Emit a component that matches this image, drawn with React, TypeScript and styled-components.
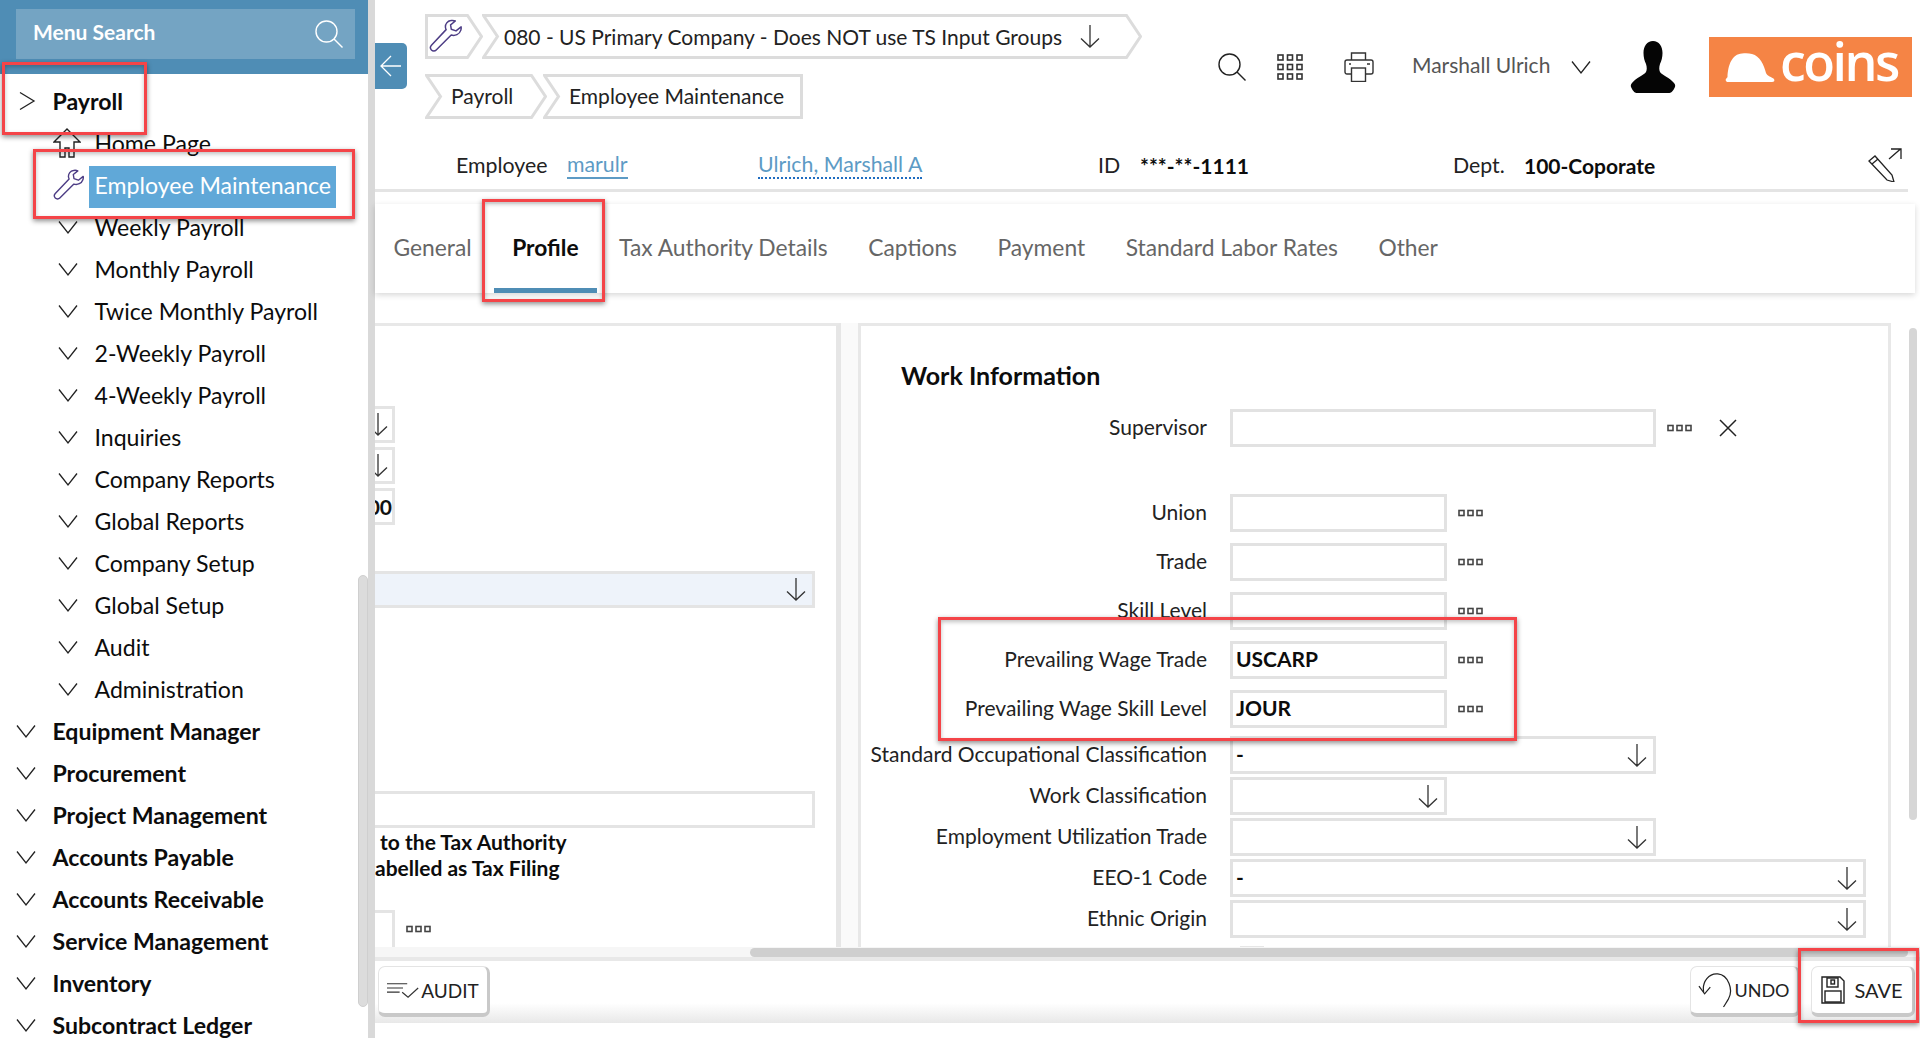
import React from 'react';
import styled, { createGlobalStyle } from 'styled-components';

const Global = createGlobalStyle`
  html, body { margin: 0; padding: 0; background: #fff; overflow: hidden; }
  * { box-sizing: border-box; }
  body { font-family: Lato, "Liberation Sans", sans-serif; color: #111; }
`;

const Page = styled.div`
  position: relative;
  display: flex;
  width: 1920px;
  height: 1038px;
  overflow: hidden;
`;

/* ---------- sidebar ---------- */
const Sidebar = styled.aside`
  position: relative;
  flex: 0 0 375px;
  height: 1038px;
  overflow: hidden;
  border-right: 7px solid #d9d9d9;
`;
const SideHead = styled.div`
  margin-right: -7px;
  height: 74px;
  padding: 9px 20px 15px 16px;
  background: #4f8db5;
  position: relative;
  z-index: 1;
`;
const SearchBox = styled.div`
  display: flex;
  align-items: center;
  justify-content: space-between;
  height: 50px;
  padding: 0 12px 0 17px;
  background: #74a4c3;
  color: #fff;
  font-size: 21px;
  font-weight: 700;
`;
const SearchLabel = styled.span`
  margin-bottom: 5px;
`;
const Nav = styled.nav`
  padding-top: 6px;
`;
const NavRow = styled.div<{ $sub?: boolean; $top?: boolean }>`
  display: flex;
  align-items: center;
  height: 42px;
  padding-left: ${p => (p.$sub ? '58px' : '16px')};
  font-size: 23.1px;
  font-weight: ${p => (p.$top ? 700 : 400)};
  color: #0c0c0c;
  white-space: nowrap;
`;
const NavIcon = styled.span<{ $sub?: boolean }>`
  display: flex;
  align-items: center;
  justify-content: flex-start;
  flex: 0 0 ${p => (p.$sub ? '41.5px' : '36.5px')};
  margin-left: ${p => (p.$sub ? '-5px' : '0')};
`;
const NavText = styled.span<{ $active?: boolean }>`
  display: inline-flex;
  align-items: center;
  height: ${p => (p.$active ? '42px' : 'auto')};
  margin-left: ${p => (p.$active ? '-6px' : '0')};
  margin-top: ${p => (p.$active ? '4px' : '0')};
  padding: ${p => (p.$active ? '0 6px 4px' : '0')};
  width: ${p => (p.$active ? '247px' : 'auto')};
  background: ${p => (p.$active ? '#60a8d8' : 'transparent')};
  color: ${p => (p.$active ? '#fff' : 'inherit')};
`;
const SideThumb = styled.div`
  position: absolute;
  left: 358px;
  top: 575px;
  width: 10px;
  height: 432px;
  border-radius: 5px;
  background: #dcdcdc;
  border: 1px solid #cfcfcf;
`;
const EdgeThumb = styled.div`
  position: absolute;
  left: 368px;
  top: 502px;
  width: 7px;
  height: 88px;
  background: #bcbcbc;
`;

/* ---------- main ---------- */
const Main = styled.main`
  position: relative;
  flex: 1;
  min-width: 0;
  height: 1038px;
  display: flex;
  flex-direction: column;
  padding-bottom: 15px;
`;
const Collapse = styled.div`
  position: absolute;
  left: 0;
  top: 43px;
  width: 32px;
  height: 46px;
  background: #4f8db5;
  border-radius: 0 5px 5px 0;
  display: flex;
  align-items: center;
  justify-content: center;
`;
const TopBar = styled.header`
  flex: 0 0 130px;
  display: flex;
  justify-content: space-between;
`;
const Crumbs = styled.div`
  display: flex;
  flex-direction: column;
  gap: 15px;
  padding: 14px 0 0 50px;
`;
const CrumbLine = styled.div`
  display: flex;
`;
const CrumbItem = styled.div<{ $w: number; $over?: number; $h: number }>`
  position: relative;
  flex: 0 0 ${p => p.$w}px;
  height: ${p => p.$h}px;
  margin-left: ${p => -(p.$over || 0)}px;
  display: flex;
  align-items: center;
  font-size: 21px;
  color: #222;
  white-space: nowrap;
`;
const CrumbOutline = styled.svg`
  position: absolute;
  inset: 0;
`;
const CrumbLabel = styled.span<{ $pl: number; $pb: number }>`
  position: relative;
  display: flex;
  align-items: center;
  padding-left: ${p => p.$pl}px;
  padding-bottom: ${p => p.$pb}px;
`;
const Tools = styled.div`
  display: flex;
  align-items: center;
  height: 60px;
  margin-top: 37px;
  padding-right: 8px;
`;
const Tool = styled.span<{ $ml: number }>`
  display: flex;
  align-items: center;
  margin-left: ${p => p.$ml}px;
`;
const UserName = styled.span`
  font-size: 21px;
  color: #555;
  margin: 0 0 6px 38px;
  width: 137px;
  white-space: nowrap;
`;
const Logo = styled.div`
  width: 203px;
  height: 60px;
  margin-left: 33px;
  padding-left: 16px;
  background: #f58445;
  display: flex;
  align-items: center;
  gap: 5px;
  color: #fff;
  font-family: "Open Sans", sans-serif;
  font-size: 52px;
  font-weight: 600;
  line-height: 1;
  letter-spacing: -2.5px;
`;
const LogoWord = styled.span`
  margin-top: -13px;
`;

const InfoBar = styled.div`
  flex: 0 0 62px;
  margin-right: 12px;
  display: grid;
  grid-template-columns: 111px 191px 340px 42px 313px 71px 1fr 40px;
  align-items: center;
  padding: 11px 0 0 81px;
  border-bottom: 3px solid #e4e4e4;
  font-size: 21.3px;
  color: #222;
`;
const PlainLink = styled.span`
  color: #5d9bc5;
  font-weight: 400;
  justify-self: start;
  border-bottom: 2px solid #5d9bc5;
  line-height: 26px;
`;
const DottedLink = styled(PlainLink)`
  border-bottom: 2px dotted #1f6cc0;
`;
const InfoValue = styled.span`
  font-weight: 700;
  font-size: 21px;
  color: #0c0c0c;
`;

const TabBar = styled.div`
  flex: 0 0 89px;
  margin: 12px 5px 0 0;
  display: flex;
  align-items: center;
  gap: 40.5px;
  padding-left: 18.5px;
  background: #fff;
  box-shadow: 0 2px 6px rgba(0, 0, 0, 0.16);
  position: relative;
  z-index: 1;
  font-size: 22.8px;
  color: #666;
`;
const Tab = styled.div<{ $active?: boolean }>`
  position: relative;
  height: 89px;
  line-height: 87px;
  white-space: nowrap;
  color: ${p => (p.$active ? '#0c0c0c' : '#666')};
  font-weight: ${p => (p.$active ? 700 : 400)};
  ${p =>
    p.$active
      ? `&::after { content: ''; position: absolute; left: -18px; right: -18px; bottom: 0; height: 5px; background: #4f8db5; }`
      : ''}
`;

const Body = styled.div`
  position: relative;
  flex: 1;
  min-height: 0;
  display: flex;
  padding-top: 30px;
  overflow: hidden;
`;
const LeftPanel = styled.section`
  flex: 0 0 466px;
  border-top: 3px solid #e8e8e8;
  border-right: 5px solid #e6e6e6;
  padding-top: 80px;
  display: flex;
  flex-direction: column;
  overflow: hidden;
`;
const StubBox = styled.div<{ $mt?: number }>`
  flex: 0 0 37px;
  width: 20px;
  margin-top: ${p => p.$mt || 0}px;
  border: 3px solid #e4e4e4;
  border-left: 0;
  display: flex;
  align-items: center;
  justify-content: flex-end;
  font-size: 21px;
  font-weight: 700;
  overflow: hidden;
  white-space: nowrap;
`;
const StubArrow = styled.span`
  margin-right: 4px;
  display: flex;
  flex: 0 0 auto;
`;
const WideSelect = styled.div<{ $mt: number; $filled?: boolean }>`
  flex: 0 0 37px;
  width: 440px;
  margin-top: ${p => p.$mt}px;
  border: 3px solid #e4e4e4;
  border-left: 0;
  background: ${p => (p.$filled ? '#eef3fa' : '#fff')};
  display: flex;
  align-items: center;
  justify-content: flex-end;
  padding-right: 6px;
`;
const ClippedNote = styled.p`
  margin: 1px 0 0;
  font-size: 21px;
  font-weight: 700;
  line-height: 26px;
  color: #0c0c0c;
`;
const NoteLine = styled.span`
  display: block;
  white-space: nowrap;
`;
const StubTail = styled.div`
  margin-top: 29px;
  display: flex;
  align-items: flex-start;
  gap: 11px;
`;
const TailBox = styled.div`
  width: 20px;
  height: 60px;
  border: 3px solid #e4e4e4;
  border-left: 0;
`;
const TailDots = styled.span`
  display: flex;
  margin-top: 15px;
`;

const Gutter = styled.div`
  flex: 0 0 17px;
  background: #fafafa;
`;
const RightPanel = styled.section`
  flex: 0 0 1033px;
  border: 3px solid #e8e8e8;
  border-bottom: 0;
  overflow: hidden;
`;
const PanelTitle = styled.h2`
  margin: 0;
  padding: 35px 0 0 40px;
  height: 83px;
  font-size: 25px;
  font-weight: 700;
  line-height: 28px;
  color: #0c0c0c;
`;
const FormRow = styled.div<{ $mt: number }>`
  display: flex;
  align-items: center;
  height: 38px;
  margin-top: ${p => p.$mt}px;
`;
const FieldLabel = styled.label`
  flex: 0 0 346px;
  margin-right: 23px;
  padding-bottom: 4px;
  text-align: right;
  font-size: 21px;
  color: #222;
  white-space: nowrap;
`;
const Field = styled.div<{ $w: number }>`
  flex: 0 0 ${p => p.$w}px;
  height: 38px;
  border: 3px solid #e2e2e2;
  padding: 0 6px 3px 3px;
  display: flex;
  align-items: center;
  justify-content: space-between;
  font-size: 21px;
  font-weight: 700;
  color: #0c0c0c;
`;
const FieldEnd = styled.span`
  display: flex;
  margin: 4px 0 0 auto;
`;
const RowTool = styled.span<{ $ml: number }>`
  display: flex;
  margin-left: ${p => p.$ml}px;
`;
const CutField = styled.div`
  width: 24px;
  height: 20px;
  margin: 8px 0 0 379px;
  background: #e6e6e6;
`;
const VThumb = styled.div`
  position: absolute;
  right: 3px;
  top: 35px;
  width: 8px;
  height: 492px;
  border-radius: 4px;
  background: #d6d6d6;
`;

const HScroll = styled.div`
  position: relative;
  flex: 0 0 10px;
  background: #f6f6f6;
`;
const HThumb = styled.div`
  position: absolute;
  left: 375px;
  top: 1px;
  width: 1158px;
  height: 9px;
  border-radius: 5px;
  background: #cfcfcf;
`;
const Footer = styled.footer`
  flex: 0 0 66px;
  display: flex;
  align-items: flex-start;
  justify-content: space-between;
  padding: 5px 5px 0 3px;
  border-top: 4px solid #e8e8e8;
  background: linear-gradient(#fff 0, #fff 68%, #e8e8e8 100%);
`;
const FootGroup = styled.div`
  display: flex;
  gap: 11px;
`;
const FootButton = styled.button<{ $w: number; $fs: number; $gap: number }>`
  width: ${p => p.$w}px;
  height: 51px;
  display: flex;
  align-items: center;
  justify-content: center;
  gap: ${p => p.$gap}px;
  padding: 0;
  background: #fff;
  border: 1px solid #e4e4e4;
  border-bottom: 4px solid #c9c9c9;
  border-right: 3px solid #c9c9c9;
  border-radius: 7px;
  font-family: inherit;
  font-size: ${p => p.$fs}px;
  color: #222;
`;

/* ---------- annotations ---------- */
const Callout = styled.div<{ $x: number; $y: number; $w: number; $h: number }>`
  position: absolute;
  left: ${p => p.$x}px;
  top: ${p => p.$y}px;
  width: ${p => p.$w}px;
  height: ${p => p.$h}px;
  border: 3px solid #f44448;
  box-shadow: 0 2px 5px rgba(0, 0, 0, 0.45), inset 0 2px 4px rgba(0, 0, 0, 0.25);
  z-index: 5;
  pointer-events: none;
`;

/* ---------- icons ---------- */
const Chevron = ({ dir = 'down', size = 20, color = '#222' }: { dir?: 'down' | 'right'; size?: number; color?: string }) => (
  <svg width={size} height={size} viewBox="0 0 20 20" fill="none" stroke={color} strokeWidth="1.3">
    {dir === 'down' ? <path d="M1 4.5 10 16 19 4.5" /> : <path d="M4 1.5 18 10 4 18.5" />}
  </svg>
);
const LongArrow = ({ w = 20, h = 23, color = '#333' }: { w?: number; h?: number; color?: string }) => (
  <svg width={w} height={h} viewBox="0 0 20 23" fill="none" stroke={color} strokeWidth="1.3">
    <path d="M10 0v22M1 13.5l9 8.5 9-8.5" />
  </svg>
);
const Dots = () => (
  <svg width="25" height="8" viewBox="0 0 25 8" fill="none" stroke="#444" strokeWidth="1.6">
    <rect x="1" y="1.5" width="5" height="5" />
    <rect x="10" y="1.5" width="5" height="5" />
    <rect x="19" y="1.5" width="5" height="5" />
  </svg>
);
const Magnifier = ({ color = '#222', size = 28 }: { color?: string; size?: number }) => (
  <svg width={size} height={size} viewBox="0 0 28 28" fill="none" stroke={color} strokeWidth="1.4">
    <circle cx="11.5" cy="11.5" r="10.5" />
    <path d="M19 19l8.5 8.5" />
  </svg>
);
const WrenchIcon = ({ size = 32 }: { size?: number }) => (
  <svg width={size} height={size} viewBox="0 0 32 32" fill="none" stroke="#4d3d85" strokeWidth="1.4" strokeLinejoin="round">
    <path d="M20.5 1.5c-3 .4-5.4 3.2-5 6.5.1.8.3 1.3.6 2L2.3 24.6c-1.3 1.4-1.1 3.3 0 4.5 1.2 1.2 3.2 1.3 4.5 0l14.1-14c3.7 1.1 7.7-.6 9-4.4.4-1.1.5-2.2.3-3.3l-4.8 3.8-4.4-1.5-.7-4.2 4.5-3.6c-1.2-.6-2.8-.7-4.3-.4z" />
  </svg>
);
const HomeIcon = () => (
  <svg width="28" height="30" viewBox="0 0 28 30" fill="none" stroke="#222" strokeWidth="1.4">
    <path d="M14 1 1 14h6v15h5v-9h4v9h5V14h6z" />
  </svg>
);
const GridIcon = () => (
  <svg width="26" height="26" viewBox="0 0 26 26" fill="none" stroke="#333" strokeWidth="1.6">
    {[1, 10.5, 20].map(y =>
      [1, 10.5, 20].map(x => <rect key={`${x}-${y}`} x={x} y={y} width="5" height="5" />),
    )}
  </svg>
);
const PrinterIcon = () => (
  <svg width="30" height="30" viewBox="0 0 30 30" fill="none" stroke="#333" strokeWidth="1.4">
    <path d="M7.5 8V1h14v7" />
    <path d="M7.5 22H3a2 2 0 0 1-2-2V10a2 2 0 0 1 2-2h24a2 2 0 0 1 2 2v10a2 2 0 0 1-2 2h-5" />
    <rect x="7.5" y="16" width="14" height="13.5" />
    <path d="M5 12h2M23 12h3" />
  </svg>
);
const PersonIcon = () => (
  <svg width="46" height="52" viewBox="0 0 46 52" fill="#050505">
    <path d="M23 0c6 0 9.5 5 9.5 12 0 4-1 8-2.500 11-1 3-1 6 0 8 2 3 10 6 14 11 1.500 2 1.500 3 .5 5-1 2-3 5-5 5H6.500c-2 0-4-3-5-5-1-2-1-3 .5-5 4-5 12-8 14-11 1-2 1-5 0-8-1.500-3-2.500-7-2.500-11C13.500 5 17 0 23 0z" />
  </svg>
);
const HelmetIcon = () => (
  <svg width="50" height="29" viewBox="0 0 50 29" fill="#fff">
    <path d="M1 28c-1-2 1-3 1.500-4C3 12 7 1 17 .5c3-.5 7-.5 10 .5 8 2 12 11 14 19 1 3 6 4 8 6 1 2 0 3-2 3H2z" />
  </svg>
);
const EditExpand = () => (
  <svg width="34" height="34" viewBox="0 0 34 34" fill="none" stroke="#222" strokeWidth="1.3">
    <path d="M21 11 32.5 1M23 1h10v10" />
    <path d="M1 13l6-5 17 19 2 7-7-2z" />
    <path d="M4 16l6-5" />
  </svg>
);
const AuditIcon = () => (
  <svg width="32" height="17" viewBox="0 0 38 20" fill="none" stroke="#333" strokeWidth="1.4">
    <path d="M0 2h24M0 7h19M0 12h15" />
    <path d="M18 12l7 6L37 7" />
  </svg>
);
const UndoIcon = () => (
  <svg width="34" height="36" viewBox="0 0 36 38" fill="none" stroke="#222" strokeWidth="1.3">
    <path d="M6 21C4 10 12 1 21 2c11 1 17 17 11 27-2 3-3 5-5 8" />
    <path d="M1 15l6 8 6-7" />
  </svg>
);
const SaveIcon = () => (
  <svg width="24" height="28" viewBox="0 0 24 28" fill="none" stroke="#222" strokeWidth="1.4">
    <path d="M1 1h18l4 4v22H1z" />
    <rect x="6" y="2" width="11" height="9" />
    <rect x="10" y="4" width="3.5" height="4" />
    <rect x="4" y="15" width="16" height="11" />
  </svg>
);
const BackArrow = () => (
  <svg width="22" height="22" viewBox="0 0 22 22" fill="none" stroke="#fff" strokeWidth="1.3">
    <path d="M21 11H1M11 1 1 11l10 10" />
  </svg>
);
const CrossIcon = () => (
  <svg width="20" height="20" viewBox="0 0 20 20" fill="none" stroke="#222" strokeWidth="1.5">
    <path d="M2 2l16 16M18 2 2 18" />
  </svg>
);

const Crumb = ({ w, h = 45, notch, point, over, pl, pb = 1, children }: { w: number; h?: number; notch?: boolean; point?: boolean; over?: number; pl: number; pb?: number; children?: React.ReactNode }) => {
  const s = 1.5;
  const tip = point ? 14 : 0;
  const d = `M${s} ${s}H${w - s - tip}${point ? `L${w - s} ${h / 2}L${w - s - tip} ${h - s}` : `V${h - s}`}H${s}${notch ? `L${s + 14} ${h / 2}Z` : 'Z'}`;
  return (
    <CrumbItem $w={w} $h={h} $over={over}>
      <CrumbOutline width={w} height={h} viewBox={`0 0 ${w} ${h}`} fill="none" stroke="#dcdcdc" strokeWidth="3">
        <path d={d} />
      </CrumbOutline>
      <CrumbLabel $pl={pl} $pb={pb}>{children}</CrumbLabel>
    </CrumbItem>
  );
};

const subItems = ['Weekly Payroll', 'Monthly Payroll', 'Twice Monthly Payroll', '2-Weekly Payroll', '4-Weekly Payroll', 'Inquiries', 'Company Reports', 'Global Reports', 'Company Setup', 'Global Setup', 'Audit', 'Administration'];
const topItems = ['Equipment Manager', 'Procurement', 'Project Management', 'Accounts Payable', 'Accounts Receivable', 'Service Management', 'Inventory', 'Subcontract Ledger'];
const tabs = ['General', 'Profile', 'Tax Authority Details', 'Captions', 'Payment', 'Standard Labor Rates', 'Other'];

type Row = { label: string; value?: string; w: number; mt: number; arrow?: boolean };
const rows: Row[] = [
  { label: 'Union', w: 217, mt: 47 },
  { label: 'Trade', w: 217, mt: 11 },
  { label: 'Skill Level', w: 217, mt: 11 },
  { label: 'Prevailing Wage Trade', value: 'USCARP', w: 217, mt: 11 },
  { label: 'Prevailing Wage Skill Level', value: 'JOUR', w: 217, mt: 11 },
  { label: 'Standard Occupational Classification', value: '-', w: 426, mt: 8, arrow: true },
  { label: 'Work Classification', w: 217, mt: 3, arrow: true },
  { label: 'Employment Utilization Trade', w: 426, mt: 3, arrow: true },
  { label: 'EEO-1 Code', value: '-', w: 636, mt: 3, arrow: true },
  { label: 'Ethnic Origin', w: 636, mt: 3, arrow: true },
];

export default function App() {
  return (
    <Page>
      <Global />
      <Sidebar>
        <SideHead>
          <SearchBox>
            <SearchLabel>Menu Search</SearchLabel>
            <Magnifier color="#fff" />
          </SearchBox>
        </SideHead>
        <Nav>
          <NavRow $top>
            <NavIcon><Chevron dir="right" /></NavIcon>
            <span>Payroll</span>
          </NavRow>
          <NavRow $sub>
            <NavIcon $sub><HomeIcon /></NavIcon>
            <NavText>Home Page</NavText>
          </NavRow>
          <NavRow $sub>
            <NavIcon $sub><WrenchIcon /></NavIcon>
            <NavText $active>Employee Maintenance</NavText>
          </NavRow>
          {subItems.map(t => (
            <NavRow $sub key={t}>
              <NavIcon><Chevron /></NavIcon>
              <NavText>{t}</NavText>
            </NavRow>
          ))}
          {topItems.map(t => (
            <NavRow $top key={t}>
              <NavIcon><Chevron /></NavIcon>
              <span>{t}</span>
            </NavRow>
          ))}
        </Nav>
        <SideThumb />
        <EdgeThumb />
      </Sidebar>

      <Main>
        <Collapse><BackArrow /></Collapse>
        <TopBar>
          <Crumbs>
            <CrumbLine>
              <Crumb w={58} point pl={4}><WrenchIcon size={34} /></Crumb>
              <Crumb w={660} over={1} notch point pl={22}>
                <span>080 - US Primary Company - Does NOT use TS Input Groups</span>
                <Tool $ml={18}><LongArrow /></Tool>
              </Crumb>
            </CrumbLine>
            <CrumbLine>
              <Crumb w={122} notch point pl={26} pb={3}>Payroll</Crumb>
              <Crumb w={260} over={4} notch pl={26} pb={3}>Employee Maintenance</Crumb>
            </CrumbLine>
          </Crumbs>
          <Tools>
            <Tool $ml={0}><Magnifier /></Tool>
            <Tool $ml={31}><GridIcon /></Tool>
            <Tool $ml={41}><PrinterIcon /></Tool>
            <UserName>Marshall Ulrich</UserName>
            <Tool $ml={22}><Chevron /></Tool>
            <Tool $ml={39}><PersonIcon /></Tool>
            <Logo>
              <HelmetIcon />
              <LogoWord>coins</LogoWord>
            </Logo>
          </Tools>
        </TopBar>

        <InfoBar>
          <span>Employee</span>
          <PlainLink>marulr</PlainLink>
          <DottedLink>Ulrich, Marshall A</DottedLink>
          <span>ID</span>
          <InfoValue>***-**-1111</InfoValue>
          <span>Dept.</span>
          <InfoValue>100-Coporate</InfoValue>
          <EditExpand />
        </InfoBar>

        <TabBar>
          {tabs.map(t => (
            <Tab key={t} $active={t === 'Profile'}>{t}</Tab>
          ))}
        </TabBar>

        <Body>
          <LeftPanel>
            <StubBox><StubArrow><LongArrow /></StubArrow></StubBox>
            <StubBox $mt={4}><StubArrow><LongArrow /></StubArrow></StubBox>
            <StubBox $mt={4}>00</StubBox>
            <WideSelect $mt={46} $filled><LongArrow /></WideSelect>
            <WideSelect $mt={183} />
            <ClippedNote>
              <NoteLine>&nbsp;to the Tax Authority</NoteLine>
              <NoteLine>abelled as Tax Filing</NoteLine>
            </ClippedNote>
            <StubTail>
              <TailBox />
              <TailDots><Dots /></TailDots>
            </StubTail>
          </LeftPanel>
          <Gutter />
          <RightPanel>
            <PanelTitle>Work Information</PanelTitle>
            <FormRow $mt={0}>
              <FieldLabel>Supervisor</FieldLabel>
              <Field $w={426} />
              <RowTool $ml={11}><Dots /></RowTool>
              <RowTool $ml={26}><CrossIcon /></RowTool>
            </FormRow>
            {rows.map(r => (
              <FormRow key={r.label} $mt={r.mt}>
                <FieldLabel>{r.label}</FieldLabel>
                <Field $w={r.w}>
                  {r.value && <span>{r.value}</span>}
                  {r.arrow && <FieldEnd><LongArrow /></FieldEnd>}
                </Field>
                {!r.arrow && <RowTool $ml={11}><Dots /></RowTool>}
              </FormRow>
            ))}
            <CutField />
          </RightPanel>
          <VThumb />
        </Body>

        <HScroll><HThumb /></HScroll>
        <Footer>
          <FootButton $w={112} $fs={19} $gap={2}><AuditIcon />AUDIT</FootButton>
          <FootGroup>
            <FootButton $w={110} $fs={18} $gap={2}><UndoIcon />UNDO</FootButton>
            <FootButton $w={104} $fs={20} $gap={9}><SaveIcon />SAVE</FootButton>
          </FootGroup>
        </Footer>
      </Main>

      <Callout $x={2} $y={62} $w={145} $h={73} />
      <Callout $x={33} $y={149} $w={322} $h={70} />
      <Callout $x={482} $y={199} $w={123} $h={103} />
      <Callout $x={938} $y={617} $w={579} $h={124} />
      <Callout $x={1798} $y={948} $w={121} $h={75} />
    </Page>
  );
}
